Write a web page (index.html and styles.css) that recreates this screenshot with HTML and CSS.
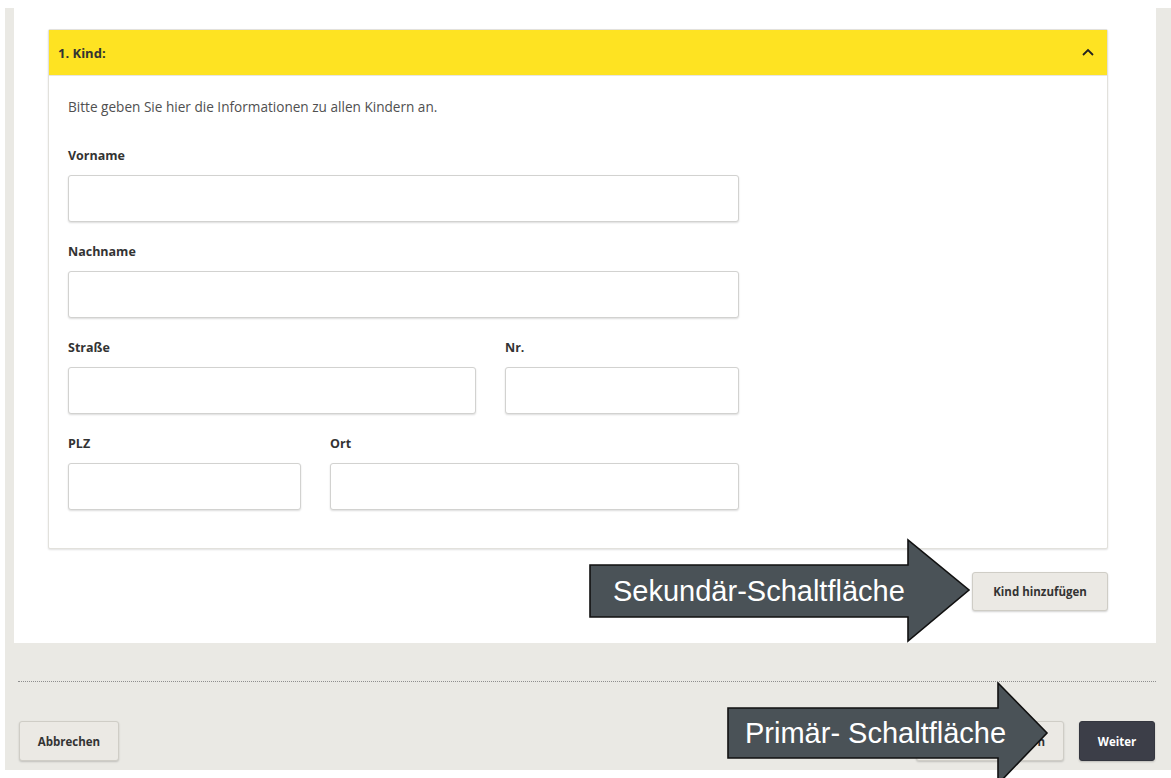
FILE: index.html
```html
<!DOCTYPE html>
<html lang="de">
<head>
<meta charset="utf-8">
<title>Kinder erfassen</title>
<link rel="stylesheet" href="styles.css">
</head>
<body>
<div class="page">
  <div class="shell">
    <section class="sheet">
      <div class="accordion">
        <div class="acc-head">
          <span class="acc-title">1. Kind:</span>
          <svg class="chevron" width="12" height="8" viewBox="0 0 12 8"><path d="M1 7 L6 2 L11 7" fill="none" stroke="#222" stroke-width="1.8"/></svg>
        </div>
        <div class="acc-body">
          <p class="intro">Bitte geben Sie hier die Informationen zu allen Kindern an.</p>
          <div class="fields">
            <div class="row one">
              <label class="field"><span class="lbl">Vorname</span><input class="inp" type="text"></label>
            </div>
            <div class="row one">
              <label class="field"><span class="lbl">Nachname</span><input class="inp" type="text"></label>
            </div>
            <div class="row wide-left">
              <label class="field"><span class="lbl">Straße</span><input class="inp" type="text"></label>
              <label class="field"><span class="lbl">Nr.</span><input class="inp" type="text"></label>
            </div>
            <div class="row wide-right">
              <label class="field"><span class="lbl">PLZ</span><input class="inp" type="text"></label>
              <label class="field"><span class="lbl">Ort</span><input class="inp" type="text"></label>
            </div>
          </div>
        </div>
      </div>
      <div class="sheet-actions">
        <button class="btn btn-secondary btn-add">Kind hinzufügen</button>
      </div>
    </section>
    <footer class="footer">
      <div class="divider"></div>
      <div class="footer-actions">
        <button class="btn btn-secondary btn-cancel">Abbrechen</button>
        <div class="footer-right">
          <button class="btn btn-secondary btn-save">Zwischenspeichern</button>
          <button class="btn btn-primary btn-next">Weiter</button>
        </div>
      </div>
    </footer>
  </div>

  <div class="callout callout-secondary">
    <svg width="384" height="106" viewBox="0 0 384 106"><polygon points="1,27 319,27 319,2 380,52 319,103 319,79 1,79" fill="#4a5257" stroke="#111" stroke-width="1.6"/></svg>
    <span class="callout-text">Sekundär-Schaltfläche</span>
  </div>
  <div class="callout callout-primary">
    <svg width="324" height="104" viewBox="0 0 324 104"><polygon points="1,26 271,26 271,1 320,51 271,102 271,76 1,76" fill="#4a5257" stroke="#111" stroke-width="1.6"/></svg>
    <span class="callout-text">Primär- Schaltfläche</span>
  </div>
</div>
</body>
</html>
```

FILE: styles.css
```css
* { box-sizing: border-box; }

html, body {
  margin: 0;
  background: #ffffff;
}

body {
  font-family: "Open Sans", "Liberation Sans", sans-serif;
  color: #333;
  width: 1171px;
  height: 778px;
  overflow: hidden;
}

.page {
  position: relative;
  padding: 8px 0 8px 5px;
}

.shell {
  background: #eae9e4;
  height: 762px;
  display: flex;
  flex-direction: column;
}

/* white content sheet */
.sheet {
  background: #ffffff;
  margin: 0 15px 0 9px;
  height: 635px;
  padding: 21px 48px 0 34px;
}

.accordion {
  border: 1px solid #e2e1dc;
  border-radius: 2px;
  box-shadow: 0 1px 2px rgba(0, 0, 0, 0.12);
  background: #fff;
}

.acc-head {
  background: #fee322;
  height: 46px;
  display: flex;
  align-items: center;
  justify-content: space-between;
  padding: 0 13px 0 9px;
  border-bottom: 1px solid #e8e6df;
}

.acc-title {
  font-size: 13px;
  font-weight: 700;
  color: #333;
}

.chevron { display: block; margin-top: -2px; }

.acc-body {
  padding: 21px 19px 38px 19px;
}

.intro {
  margin: 0;
  font-size: 13.6px;
  line-height: 20px;
  color: #505050;
}

.fields {
  margin-top: 30px;
  width: 671px;
  display: flex;
  flex-direction: column;
  gap: 21px;
}

.row {
  display: grid;
  column-gap: 29px;
}

.row.one { grid-template-columns: 1fr; }
.row.wide-left { grid-template-columns: 408px 1fr; }
.row.wide-right { grid-template-columns: 233px 1fr; }

.field {
  display: flex;
  flex-direction: column;
}

.lbl {
  font-size: 12.5px;
  font-weight: 700;
  line-height: 18px;
  margin-bottom: 10px;
  color: #333;
}

.inp {
  height: 47px;
  width: 100%;
  border: 1px solid #d2d2d0;
  border-radius: 3px;
  background: #fff;
  box-shadow: 0 1px 2px rgba(0, 0, 0, 0.14);
  font: inherit;
  margin: 0;
}

.sheet-actions {
  display: flex;
  justify-content: flex-end;
  margin-top: 23px;
}

.btn {
  font-family: "Open Sans", "Liberation Sans", sans-serif;
  font-size: 11.5px;
  font-weight: 700;
  border-radius: 3px;
  cursor: pointer;
  padding: 0;
  white-space: nowrap;
}

.btn-secondary {
  background: #ebe9e4;
  color: #333;
  border: 1px solid #cfcdc6;
  box-shadow: 0 1px 2px rgba(0, 0, 0, 0.18);
}

.btn-primary {
  background: #3c3e48;
  color: #fff;
  border: 1px solid #34363f;
  box-shadow: 0 1px 2px rgba(0, 0, 0, 0.2);
}

.btn-add { width: 136px; height: 39px; }

.footer {
  padding: 38px 15px 0 13px;
}

.divider {
  border-top: 1px dotted #8e8e8e;
}

.footer-actions {
  margin-top: 39px;
  display: flex;
  justify-content: space-between;
  padding-left: 1px;
}

.footer-right {
  display: flex;
  gap: 15px;
  margin-right: 1px;
}

.btn-cancel { width: 100px; height: 40px; }
.btn-save { width: 148px; height: 40px; }
.btn-next { width: 76px; height: 40px; }

/* annotation arrows laid over the form */
.callout {
  position: absolute;
}

.callout svg { display: block; }

.callout-text {
  position: absolute;
  top: 0;
  font-family: "Liberation Sans", Arial, sans-serif;
  font-size: 29px;
  color: #ffffff;
  white-space: nowrap;
}

.callout-secondary { left: 589px; top: 538px; }
.callout-secondary .callout-text { left: 24px; line-height: 106px; }

.callout-primary { left: 727px; top: 682px; }
.callout-primary .callout-text { left: 18px; line-height: 102px; }
```
